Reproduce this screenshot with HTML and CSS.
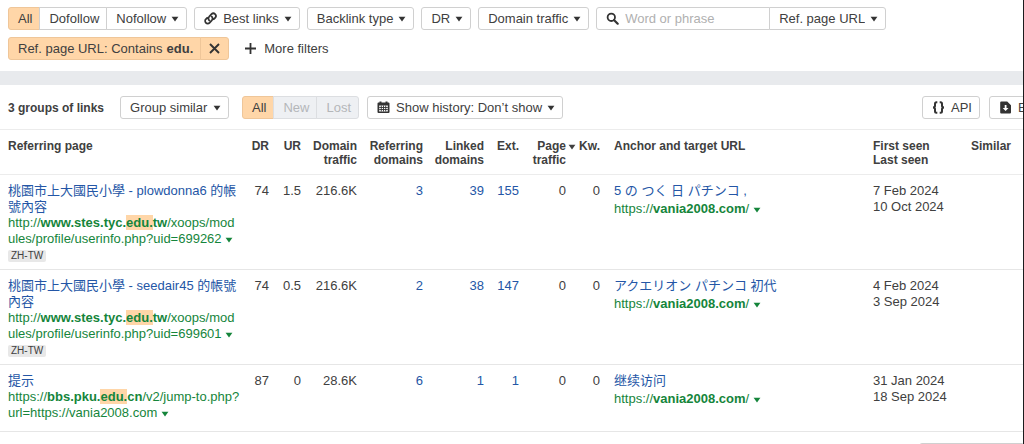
FILE: index.html
```
<!DOCTYPE html>
<html lang="en">
<head>
<meta charset="utf-8">
<title>Backlinks</title>
<link rel="stylesheet" href="styles.css">
</head>
<body>
<svg class="defs" aria-hidden="true">
  <symbol id="caret" viewBox="0 0 8 6"><path d="M.6.7h6.8L4 5.5z" fill="currentColor"/></symbol>
</svg>
<main class="page">
  <section class="filters" aria-label="Filters">
    <div class="bar">
      <div class="group">
        <button class="btn active">All</button>
        <button class="btn">Dofollow</button>
        <button class="btn">Nofollow <svg class="caret"><use href="#caret"/></svg></button>
      </div>
      <button class="btn"><svg class="icon" viewBox="0 0 13 13" fill="none" stroke="currentColor" stroke-width="1.8" stroke-linecap="round"><path d="M5.2 8.3a2.6 2.6 0 0 1 0-3.7l2.3-2.4a2.5 2.5 0 0 1 3.6 3.6L9.8 7.2M7.8 4.7a2.6 2.6 0 0 1 0 3.7l-2.3 2.4a2.5 2.5 0 0 1-3.6-3.6l1.3-1.4"/></svg>Best links <svg class="caret"><use href="#caret"/></svg></button>
      <button class="btn">Backlink type <svg class="caret"><use href="#caret"/></svg></button>
      <button class="btn">DR <svg class="caret"><use href="#caret"/></svg></button>
      <button class="btn">Domain traffic <svg class="caret"><use href="#caret"/></svg></button>
      <div class="group">
        <label class="search">
          <svg class="icon" viewBox="0 0 13 13" fill="none" stroke="currentColor"><circle cx="5.3" cy="5.3" r="3.7" stroke-width="1.8"/><path d="m8.2 8.2 3.5 3.5" stroke-width="2.2" stroke-linecap="round"/></svg>
          <input type="text" placeholder="Word or phrase" aria-label="Word or phrase">
        </label>
        <div class="picker"><select aria-label="Search in"><option>Ref. page URL</option></select><svg class="caret"><use href="#caret"/></svg></div>
      </div>
    </div>
    <div class="bar">
      <div class="group chip">
        <button class="btn active">Ref. page URL: Contains <b>edu.</b></button>
        <button class="btn active remove" aria-label="Remove filter"><svg class="cross" viewBox="0 0 11 11" stroke="currentColor" stroke-width="1.9"><path d="m1 1 9 9m0-9-9 9"/></svg></button>
      </div>
      <button class="btn plain"><svg class="cross" viewBox="0 0 11 11" stroke="currentColor" stroke-width="1.8"><path d="M5.5 0v11M0 5.5h11"/></svg>More filters</button>
    </div>
  </section>

  <section class="toolbar" aria-label="Results toolbar">
    <h1 class="count">3 groups of links</h1>
    <div class="picker grouping"><select aria-label="Grouping"><option>Group similar</option></select><svg class="caret"><use href="#caret"/></svg></div>
    <div class="group">
      <button class="btn active">All</button>
      <button class="btn" disabled>New</button>
      <button class="btn" disabled>Lost</button>
    </div>
    <button class="btn history"><svg class="icon" viewBox="0 0 13 13"><path d="M1.5 1.5h1V.5h2v1h4v-1h2v1h1a1 1 0 0 1 1 1v8.500a1 1 0 0 1-1 1h-10a1 1 0 0 1-1-1V2.500a1 1 0 0 1 1-1z" fill="currentColor"/><path d="M2.200 4.500h8.600v6H2.200z" fill="#fff"/><path d="M2.200 6.500h8.600M2.200 8.500h8.600M4.300 4.500v6M6.500 4.500v6M8.700 4.500v6" stroke="currentColor" stroke-width=".9"/></svg>Show history: Don’t show <svg class="caret"><use href="#caret"/></svg></button>
    <div class="actions">
      <button class="btn"><svg class="icon" viewBox="0 0 13 13" fill="none" stroke="currentColor" stroke-width="2"><path d="M5.300 1.200H4.500q-1.500 0-1.500 1.500v2Q3 6.500 1 6.500q2 0 2 1.800v2q0 1.500 1.500 1.500h.8M7.700 1.200h.8q1.500 0 1.500 1.500v2q0 1.800 2 1.800-2 0-2 1.800v2q0 1.500-1.500 1.500h-.8"/></svg>API</button>
      <button class="btn"><svg class="icon" viewBox="0 0 13 13"><path d="M2.200.5h6L12 4.200v7.300a1 1 0 0 1-1 1H2.200a1 1 0 0 1-1-1v-10a1 1 0 0 1 1-1z" fill="currentColor"/><path d="M5.700 4h1.800v3h2L6.600 10 3.700 7h2z" fill="#fff"/></svg>Export</button>
    </div>
  </section>

  <table class="links">
    <colgroup>
      <col class="c-page"><col class="c-dr"><col class="c-ur"><col class="c-traffic"><col class="c-ref"><col class="c-linked"><col class="c-ext"><col class="c-pt"><col class="c-kw"><col><col class="c-seen"><col class="c-similar">
    </colgroup>
    <thead>
      <tr>
        <th class="left">Referring page</th><th>DR</th><th>UR</th><th>Domain<br>traffic</th><th>Referring<br>domains</th><th>Linked<br>domains</th><th>Ext.</th>
        <th class="sorted"><span>Page<br>traffic</span><svg class="caret small"><use href="#caret"/></svg></th><th>Kw.</th><th class="left anchor">Anchor and target URL</th><th class="left">First seen<br>Last seen</th><th>Similar</th>
      </tr>
    </thead>
    <tbody>
      <tr>
        <td class="left"><a class="title" lang="zh-TW" href="#">桃園市上大國民小學 - plowdonna6 的帳號內容</a><a class="url" href="#">http://<b>www.stes.tyc.<mark>edu.</mark>tw</b>/xoops/modules/profile/userinfo.php?uid=699262 <svg class="caret small"><use href="#caret"/></svg></a><span class="tag">ZH-TW</span></td>
        <td>74</td><td>1.5</td><td>216.6K</td><td><a href="#">3</a></td><td><a href="#">39</a></td><td><a href="#">155</a></td><td class="sorted">0</td><td>0</td>
        <td class="left anchor"><a class="title" lang="ja" href="#">5 の つく 日 パチンコ ,</a><a class="url" href="#">https://<b>vania2008.com</b>/ <svg class="caret small"><use href="#caret"/></svg></a></td>
        <td class="left">7 Feb 2024<br>10 Oct 2024</td><td></td>
      </tr>
      <tr>
        <td class="left"><a class="title" lang="zh-TW" href="#">桃園市上大國民小學 - seedair45 的帳號內容</a><a class="url" href="#">http://<b>www.stes.tyc.<mark>edu.</mark>tw</b>/xoops/modules/profile/userinfo.php?uid=699601 <svg class="caret small"><use href="#caret"/></svg></a><span class="tag">ZH-TW</span></td>
        <td>74</td><td>0.5</td><td>216.6K</td><td><a href="#">2</a></td><td><a href="#">38</a></td><td><a href="#">147</a></td><td class="sorted">0</td><td>0</td>
        <td class="left anchor"><a class="title" lang="ja" href="#">アクエリオン パチンコ 初代</a><a class="url" href="#">https://<b>vania2008.com</b>/ <svg class="caret small"><use href="#caret"/></svg></a></td>
        <td class="left">4 Feb 2024<br>3 Sep 2024</td><td></td>
      </tr>
      <tr>
        <td class="left"><a class="title" lang="zh-CN" href="#">提示</a><a class="url" href="#">https://<b>bbs.pku.<mark>edu.</mark>cn</b>/v2/jump-to.php?<wbr>url=https://vania2008.com <svg class="caret small"><use href="#caret"/></svg></a></td>
        <td>87</td><td>0</td><td>28.6K</td><td><a href="#">6</a></td><td><a href="#">1</a></td><td><a href="#">1</a></td><td class="sorted">0</td><td>0</td>
        <td class="left anchor"><a class="title" lang="zh-CN" href="#">继续访问</a><a class="url" href="#">https://<b>vania2008.com</b>/ <svg class="caret small"><use href="#caret"/></svg></a></td>
        <td class="left">31 Jan 2024<br>18 Sep 2024</td><td></td>
      </tr>
    </tbody>
  </table>
  <footer class="foot"><button class="btn"></button></footer>
</main>
</body>
</html>
```

FILE: styles.css
```
* { box-sizing: border-box; }
html { overflow: hidden; background: #fff; }
body {
  margin: 0;
  color: #404040;
  font: 13px/16px "Liberation Sans", "Noto Sans CJK TC", sans-serif;
}
.defs { position: absolute; width: 0; height: 0; }
.page { min-height: 100vh; border-right: 1px solid #1c1c1e; overflow: hidden; }

.filters {
  display: flex;
  flex-direction: column;
  gap: 7px;
  padding: 7px 8px 11px;
  border-bottom: 14px solid #e8eaed;
}
.bar { display: flex; gap: 7px; }
.group { display: flex; }

.btn, .picker, .search {
  height: 23px;
  border: 1px solid #d0d0d0;
  border-radius: 3px;
  background: #fff;
  color: #404040;
  font: inherit;
  white-space: nowrap;
}
.btn { display: flex; align-items: center; padding: 0 7px 0 9px; flex: none; }
.btn b { margin-left: 4px; }
.group > * { border-radius: 0; }
.group > * + * { margin-left: -1px; }
.group > :first-child { border-radius: 3px 0 0 3px; }
.group > :last-child { border-radius: 0 3px 3px 0; }
.btn.active { background: #ffd6a8; border-color: #efc699; }
.btn:disabled { background: #eef0f3; border-color: #dcdee1; color: #b4b6b9; }
.btn.remove { padding: 0 8px; }
.btn.plain { border-color: transparent; padding: 0 8px; }
.plain .cross { margin-right: 8px; }

.icon { width: 13px; height: 13px; margin-right: 6px; flex: none; color: #333; }
.cross { width: 11px; height: 11px; fill: none; color: #333; }
.caret { width: 8px; height: 6px; margin-left: 5px; flex: none; color: #333; }
.caret.small { width: 8px; height: 6px; margin-left: 0; color: inherit; }

.search { display: flex; align-items: center; width: 174px; padding: 0 9px; }
.search input {
  width: 100%;
  min-width: 0;
  padding: 0;
  border: 0;
  outline: 0;
  background: none;
  font: inherit;
}
.search input::placeholder { color: #b0b0b0; opacity: 1; }
.picker { display: grid; align-items: center; flex: none; }
.picker > * { grid-area: 1 / 1; }
.picker select {
  appearance: none;
  height: 21px;
  padding: 0 20px 0 9px;
  border: 0;
  background: none;
  color: inherit;
  font: inherit;
}
.picker .caret { justify-self: end; margin-right: 7px; pointer-events: none; }

.toolbar { display: flex; align-items: center; padding: 11px 0 10px 8px; }
.count { margin: 0; font-size: 12px; line-height: 16px; white-space: nowrap; }
.grouping { margin: 0 13px 0 16px; }
.history { margin-left: 8px; }
/* The actions run past the right edge of the panel, where they are cut off. */
.actions { display: flex; gap: 9px; width: 101px; margin-left: auto; }

.links { width: 100%; table-layout: fixed; border-collapse: separate; border-spacing: 0; }
.c-page { width: 240px; }
.c-dr { width: 29px; }
.c-ur { width: 32px; }
.c-traffic { width: 56px; }
.c-ref { width: 66px; }
.c-linked { width: 61px; }
.c-ext { width: 35px; }
.c-pt { width: 57px; }
.c-kw { width: 24px; }
.c-seen { width: 83px; }
.c-similar { width: 67px; }
th {
  height: 46px;
  padding: 9px 0 0;
  border: solid #ececec;
  border-width: 1px 0;
  font-size: 12px;
  line-height: 14px;
  text-align: right;
  vertical-align: top;
  white-space: nowrap;
}
td {
  padding: 8px 0 7px;
  border-bottom: 1px solid #e6e6e6;
  text-align: right;
  vertical-align: top;
}
tbody tr:last-child td { padding-bottom: 10px; }
th:last-child { padding-right: 12px; }
.left { text-align: left; }
.left:first-child { padding-left: 8px; }
.anchor { padding-left: 14px; }
.sorted { padding-right: 10px; }
th.sorted { padding-right: 0; }
th.sorted span { display: inline-block; vertical-align: top; }
th.sorted .caret { margin: 5px 0 0 2px; vertical-align: top; }

a { color: #2456a6; text-decoration: none; }
.title, .url { display: block; }
.url { color: #15853b; word-break: break-all; }
.anchor .url { margin-top: 2px; }
[lang="ja"] { font-family: "Liberation Sans", "Noto Sans CJK JP", sans-serif; }
[lang="zh-CN"] { font-family: "Liberation Sans", "Noto Sans CJK SC", sans-serif; }
mark { background: #ffd6a8; color: inherit; font-weight: inherit; }
.tag {
  display: table;
  margin-top: 3px;
  padding: 0 3px;
  border-radius: 2px;
  background: #e8e8e8;
  font-size: 10px;
  line-height: 12px;
}
.foot { display: flex; justify-content: flex-end; height: 13px; padding-top: 11px; }
.foot .btn { width: 104px; border-radius: 3px 0 0 0; }
```
